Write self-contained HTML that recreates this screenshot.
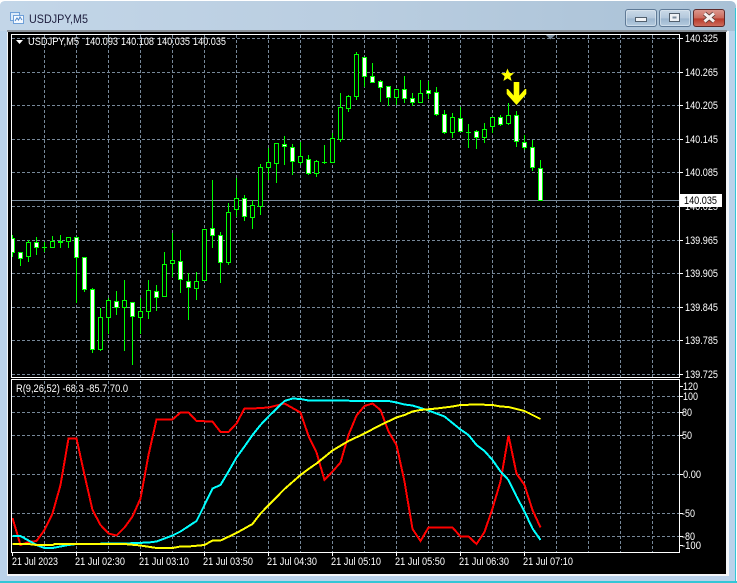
<!DOCTYPE html>
<html><head><meta charset="utf-8"><title>USDJPY,M5</title>
<style>
html,body{margin:0;padding:0;background:#fff;width:737px;height:583px;overflow:hidden}
svg{display:block}
text{font-family:"Liberation Sans",sans-serif;font-size:11px;fill:#fff}
.c{shape-rendering:crispEdges}
</style></head><body>
<svg width="737" height="583" viewBox="0 0 737 583" xmlns="http://www.w3.org/2000/svg">
<defs>
<linearGradient id="tb" x1="0" x2="1" y1="0" y2="0"><stop offset="0" stop-color="#c3d6e8"/><stop offset=".5" stop-color="#b9cde0"/><stop offset="1" stop-color="#a9c1d6"/></linearGradient>
<linearGradient id="btn" x1="0" x2="0" y1="0" y2="1"><stop offset="0" stop-color="#cbdae8"/><stop offset=".5" stop-color="#b3c8dc"/><stop offset=".55" stop-color="#9cb6cf"/><stop offset="1" stop-color="#b7cde0"/></linearGradient>
<linearGradient id="cls" x1="0" x2="0" y1="0" y2="1"><stop offset="0" stop-color="#dc9a90"/><stop offset=".5" stop-color="#cb6a5c"/><stop offset=".55" stop-color="#b83a2a"/><stop offset="1" stop-color="#cf6f5f"/></linearGradient>
<clipPath id="cm"><rect x="12" y="35" width="667" height="342"/></clipPath>
<clipPath id="cs"><rect x="12" y="380" width="667" height="172"/></clipPath>
</defs>
<path d="M0 6Q0 1 6 1H730Q735 1 736 6V583H0Z" fill="#bad2ea"/>
<path d="M0 6Q0 1 6 1H730Q735 1 736 6V31H0Z" fill="url(#tb)"/>
<rect x="0" y="581" width="737" height="2" fill="#33c6d6"/>
<rect x="735" y="8" width="1" height="575" fill="#33c6d6"/>
<rect x="7" y="31" width="722" height="545" fill="#f4f6f8"/>
<rect x="7" y="30" width="720" height="2" fill="#8a9198"/>
<rect x="8" y="32" width="718" height="542" fill="#000"/>

<!-- title icon -->
<rect x="10.500" y="12.500" width="9" height="8" fill="#dcebfa" stroke="#6fa0d8"/>
<rect x="13.500" y="15.500" width="10" height="8" fill="#f4f9ff" stroke="#6fa0d8"/>
<path d="M15 21l2-3 1.500 2 1.500-3 2 3" fill="none" stroke="#4d86c8" stroke-width="1"/>
<text x="29" y="23" textLength="59" lengthAdjust="spacingAndGlyphs" style="fill:#1c1c3c;font-size:12px">USDJPY,M5</text>

<!-- buttons -->
<rect x="625.500" y="9.500" width="31" height="17" rx="2.500" fill="url(#btn)" stroke="#5f7a96"/>
<rect x="626.500" y="10.500" width="29" height="15" rx="2" fill="none" stroke="#dfe9f2" stroke-opacity=".6"/>
<rect x="635.500" y="17.500" width="11" height="4" fill="#f1f4f7" stroke="#52606e"/>
<rect x="659.500" y="9.500" width="31" height="17" rx="2.500" fill="url(#btn)" stroke="#5f7a96"/>
<rect x="660.500" y="10.500" width="29" height="15" rx="2" fill="none" stroke="#dfe9f2" stroke-opacity=".6"/>
<rect x="669.500" y="13.500" width="10" height="8" fill="#eef2f6" stroke="#52606e"/>
<rect x="672.500" y="16.500" width="4" height="2" fill="#7a8b9c"/>
<rect x="693.500" y="9.500" width="31" height="17" rx="2.500" fill="url(#cls)" stroke="#5e2a2a"/>
<path d="M704.500 13.500L714 21.500M714 13.500L704.500 21.500" stroke="#5a3a36" stroke-width="4.500"/>
<path d="M704.500 13.500L714 21.500M714 13.500L704.500 21.500" stroke="#f6f0ee" stroke-width="3"/>

<!-- main chart -->
<g class="c" clip-path="url(#cm)" stroke="#778899" stroke-dasharray="3 2" fill="none">
<path d="M12 38.500H679M12 72.500H679M12 105.500H679M12 139.500H679M12 172.500H679M12 206.500H679M12 240.500H679M12 273.500H679M12 307.500H679M12 340.500H679M12 374.500H679"/>
<path d="M44.500 35V377M76.500 35V377M108.500 35V377M140.500 35V377M172.500 35V377M204.500 35V377M236.500 35V377M268.500 35V377M300.500 35V377M332.500 35V377M364.500 35V377M396.500 35V377M428.500 35V377M460.500 35V377M492.500 35V377M524.500 35V377M556.500 35V377M588.500 35V377M620.500 35V377M652.500 35V377"/>
</g>
<path class="c" d="M12 200.500H680" stroke="#778899" fill="none"/>
<g class="c" clip-path="url(#cm)">
<path fill="none" stroke="#00ff00" d="M12.500 235V257M20.500 252V266M28.500 240V262M36.500 237V255M44.500 242V252M42 247.500H47M52.500 236V247M60.500 235V248M68.500 237V248M76.500 237V303M84.500 257V292M92.500 288V353M100.500 308V351M108.500 298V334M116.500 291V315M124.500 280V351M132.500 302V365M140.500 298V334M148.500 280V319M156.500 285V311M164.500 252V297M172.500 233V277M180.500 250V293M188.500 273V320M196.500 272V300M204.500 229V281M212.500 180V248M220.500 232V283M228.500 203V265M236.500 178V217M244.500 195V221M252.500 200V229M260.500 164V215M268.500 148V180M276.500 143V183M284.500 136V165M292.500 144V175M300.500 142V165M308.500 155V175M316.500 160V177M324.500 145V164M322 162.500H327M332.500 133V163M340.500 93V142M348.500 95V112M356.500 52V100M364.500 57V87M372.500 63V83M380.500 80V102M388.500 86V106M396.500 89V105M404.500 76V103M412.500 93V106M420.500 80V103M428.500 81V99M436.500 87V116M444.500 110V134M452.500 113V138M460.500 107V132M468.500 124V148M466 132.500H471M476.500 130V149M484.500 123V143M492.500 117V133M500.500 115V126M508.500 103V125M516.500 111V147M524.500 135V150M532.500 140V171M540.500 160V200"/>
<path fill="#000" stroke="#00ff00" d="M26.500 242.500h4v14h-4zM50.500 241.500h4v6h-4zM66.500 237.500h4v4h-4zM98.500 317.500h4v32h-4zM106.500 300.500h4v17h-4zM122.500 300.500h4v7h-4zM138.500 311.500h4v6h-4zM146.500 290.500h4v21h-4zM162.500 264.500h4v32h-4zM170.500 260.500h4v3h-4zM194.500 281.500h4v7h-4zM202.500 229.500h4v51h-4zM226.500 212.500h4v50h-4zM234.500 198.500h4v11h-4zM250.500 205.500h4v12h-4zM258.500 167.500h4v39h-4zM266.500 162.500h4v5h-4zM274.500 143.500h4v20h-4zM298.500 156.500h4v6h-4zM314.500 161.500h4v12h-4zM330.500 138.500h4v24h-4zM338.500 107.500h4v32h-4zM346.500 96.500h4v12h-4zM354.500 54.500h4v42h-4zM394.500 89.500h4v8h-4zM418.500 93.500h4v9h-4zM450.500 117.500h4v15h-4zM482.500 129.500h4v8h-4zM490.500 117.500h4v9h-4zM506.500 115.500h4v8h-4z"/>
<path fill="#fff" stroke="#00ff00" d="M10.500 238.500h4v14h-4zM18.500 252.500h4v6h-4zM34.500 242.500h4v5h-4zM58.500 241.500h4v1h-4zM74.500 237.500h4v20h-4zM82.500 257.500h4v32h-4zM90.500 289.500h4v60h-4zM114.500 301.500h4v6h-4zM130.500 302.500h4v14h-4zM154.500 291.500h4v6h-4zM178.500 261.500h4v18h-4zM186.500 281.500h4v6h-4zM210.500 228.500h4v7h-4zM218.500 235.500h4v27h-4zM242.500 198.500h4v18h-4zM282.500 144.500h4v2h-4zM290.500 147.500h4v14h-4zM306.500 159.500h4v14h-4zM362.500 57.500h4v19h-4zM370.500 76.500h4v6h-4zM378.500 81.500h4v6h-4zM386.500 86.500h4v11h-4zM402.500 89.500h4v9h-4zM410.500 98.500h4v4h-4zM426.500 90.500h4v3h-4zM434.500 92.500h4v22h-4zM442.500 114.500h4v18h-4zM458.500 118.500h4v13h-4zM474.500 131.500h4v6h-4zM498.500 117.500h4v7h-4zM514.500 115.500h4v26h-4zM522.500 142.500h4v5h-4zM530.500 147.500h4v20h-4zM538.500 168.500h4v32h-4z"/>
</g>
<path d="M546 35H555L550.500 39.500Z" fill="#778899"/>
<polygon points="507.500,68.500 509.300,73 514,73.300 510.400,76.300 511.600,81 507.500,78.400 503.400,81 504.600,76.300 501,73.300 505.700,73" fill="#ffff00"/>
<polygon points="513.700,82 519.300,82 519.300,95.500 525,89 526.300,89 526.300,94 516.500,105 506.700,94 506.700,89 508,89 513.700,95.500" fill="#ffff00"/>
<rect class="c" x="11.500" y="34.500" width="668" height="343" fill="none" stroke="#fff"/>
<path d="M16 40H23L19.500 44Z" fill="#fff"/>
<text x="28" y="45" textLength="51" lengthAdjust="spacingAndGlyphs">USDJPY,M5</text>
<text x="85" y="45" textLength="33" lengthAdjust="spacingAndGlyphs">140.093</text>
<text x="121" y="45" textLength="33" lengthAdjust="spacingAndGlyphs">140.108</text>
<text x="157" y="45" textLength="33" lengthAdjust="spacingAndGlyphs">140.035</text>
<text x="193" y="45" textLength="33" lengthAdjust="spacingAndGlyphs">140.035</text>

<!-- price axis -->
<path class="c" d="M680 38.500h3M680 72.500h3M680 105.500h3M680 139.500h3M680 172.500h3M680 206.500h3M680 240.500h3M680 273.500h3M680 307.500h3M680 340.500h3M680 374.500h3" stroke="#fff" fill="none"/>
<g>
<text x="685" y="42" textLength="33" lengthAdjust="spacingAndGlyphs">140.325</text>
<text x="685" y="76" textLength="33" lengthAdjust="spacingAndGlyphs">140.265</text>
<text x="685" y="109" textLength="33" lengthAdjust="spacingAndGlyphs">140.205</text>
<text x="685" y="143" textLength="33" lengthAdjust="spacingAndGlyphs">140.145</text>
<text x="685" y="176" textLength="33" lengthAdjust="spacingAndGlyphs">140.085</text>
<text x="685" y="210" textLength="33" lengthAdjust="spacingAndGlyphs">140.025</text>
<text x="685" y="244" textLength="33" lengthAdjust="spacingAndGlyphs">139.965</text>
<text x="685" y="277" textLength="33" lengthAdjust="spacingAndGlyphs">139.905</text>
<text x="685" y="311" textLength="33" lengthAdjust="spacingAndGlyphs">139.845</text>
<text x="685" y="344" textLength="33" lengthAdjust="spacingAndGlyphs">139.785</text>
<text x="685" y="378" textLength="33" lengthAdjust="spacingAndGlyphs">139.725</text>
</g>
<rect x="680" y="194" width="42" height="13" fill="#fff"/>
<text x="684" y="204" textLength="33" lengthAdjust="spacingAndGlyphs" style="fill:#000">140.035</text>

<!-- RSI sub window -->
<g class="c" clip-path="url(#cs)" stroke="#778899" stroke-dasharray="3 2" fill="none">
<path d="M12 396.500H679M12 412.500H679M12 435.500H679M12 474.500H679M12 513.500H679M12 536.500H679"/>
<path d="M44.500 381V552M76.500 381V552M108.500 381V552M140.500 381V552M172.500 381V552M204.500 381V552M236.500 381V552M268.500 381V552M300.500 381V552M332.500 381V552M364.500 381V552M396.500 381V552M428.500 381V552M460.500 381V552M492.500 381V552M524.500 381V552M556.500 381V552M588.500 381V552M620.500 381V552M652.500 381V552"/>
</g>
<g class="c" clip-path="url(#cs)" fill="none" stroke-width="2" stroke-linejoin="miter">
<polyline stroke="#ff0000" points="12.500,518 20.500,545 28.500,542 36.500,541 44.500,530 52.500,513.500 60.500,485 68.500,438.500 76.500,438.500 84.500,475 92.500,510 100.500,525 108.500,533.500 116.500,535.500 124.500,527.500 132.500,516.500 140.500,498.500 148.500,455 156.500,419.500 172.500,419.500 180.500,412.500 188.500,412.500 196.500,421 212.500,421.500 220.500,432 228.500,432 236.500,423.500 244.500,408.500 252.500,408.500 268.500,407.500 284.500,403.500 300.500,412.500 308.500,436 316.500,452.500 324.500,480 332.500,471.500 340.500,462.500 348.500,435 356.500,415.500 364.500,406 372.500,403.500 380.500,410 388.500,431.500 396.500,445 404.500,481.500 412.500,529 420.500,541 428.500,527.500 452.500,527.500 460.500,536.500 468.500,536.500 476.500,544 484.500,532 492.500,508.500 500.500,481.500 508.500,435.500 516.500,473.500 524.500,485 532.500,510 540.500,527.500"/>
<polyline stroke="#00ffff" points="12.500,536 20.500,536 28.500,540.500 36.500,545 44.500,548 52.500,548 60.500,546.500 68.500,545 76.500,544 124.500,543.500 148.500,542.500 156.500,541.500 172.500,535.500 180.500,531.500 196.500,521 204.500,505 212.500,488.500 220.500,485 228.500,471.500 236.500,457.500 244.500,446.500 252.500,435 260.500,425 268.500,416.500 284.500,401 292.500,398.500 300.500,399 308.500,400.500 388.500,401 396.500,402.500 404.500,404.500 412.500,405.500 428.500,410.500 444.500,416.500 460.500,429.500 468.500,435 476.500,445 484.500,451 492.500,460 500.500,471.500 508.500,480 516.500,496.500 524.500,511.500 532.500,528.500 540.500,540"/>
<polyline stroke="#ffff00" points="12.500,544 28.500,544 36.500,545 52.500,545 55,544 124.500,544 140.500,545.500 156.500,548 172.500,548 180.500,546.500 188.500,546.500 204.500,545 212.500,540.500 220.500,540.500 236.500,533 252.500,524 260.500,513.500 284.500,489 300.500,475 308.500,469 316.500,463.500 332.500,450.500 348.500,441 364.500,433.500 380.500,425 396.500,417.500 404.500,415 412.500,411.500 420.500,410 436.500,408.500 452.500,406.500 460.500,405 476.500,404.500 492.500,405 500.500,406.500 508.500,407 524.500,411 532.500,415 540.500,419"/>
</g>
<rect class="c" x="11.500" y="379.500" width="668" height="173" fill="none" stroke="#fff"/>
<text x="16" y="392" textLength="112" lengthAdjust="spacingAndGlyphs">R(9,26,52) -68.3 -85.7 70.0</text>
<path class="c" d="M680 386.500h3M680 396.500h3M680 412.500h3M680 435.500h3M680 474.500h3M680 513.500h3M680 536.500h3M680 545.500h3" stroke="#fff" fill="none"/>
<text x="683" y="390" textLength="15" lengthAdjust="spacingAndGlyphs">120</text>
<text x="683" y="400" textLength="15" lengthAdjust="spacingAndGlyphs">100</text>
<text x="682" y="416" textLength="10" lengthAdjust="spacingAndGlyphs">80</text>
<text x="682" y="439" textLength="10" lengthAdjust="spacingAndGlyphs">50</text>
<text x="683" y="478" textLength="18" lengthAdjust="spacingAndGlyphs">0.00</text>
<text x="682" y="517" textLength="13" lengthAdjust="spacingAndGlyphs">-50</text>
<text x="682" y="540" textLength="13" lengthAdjust="spacingAndGlyphs">-80</text>
<text x="682" y="549" textLength="19" lengthAdjust="spacingAndGlyphs">-100</text>

<!-- time axis -->
<path class="c" d="M12.500 553v3M76.500 553v3M140.500 553v3M204.500 553v3M268.500 553v3M332.500 553v3M396.500 553v3M460.500 553v3M524.500 553v3" stroke="#fff" fill="none"/>
<text x="12" y="565" textLength="46" lengthAdjust="spacingAndGlyphs">21 Jul 2023</text>
<text x="75" y="565" textLength="50" lengthAdjust="spacingAndGlyphs">21 Jul 02:30</text>
<text x="139" y="565" textLength="50" lengthAdjust="spacingAndGlyphs">21 Jul 03:10</text>
<text x="203" y="565" textLength="50" lengthAdjust="spacingAndGlyphs">21 Jul 03:50</text>
<text x="267" y="565" textLength="50" lengthAdjust="spacingAndGlyphs">21 Jul 04:30</text>
<text x="331" y="565" textLength="50" lengthAdjust="spacingAndGlyphs">21 Jul 05:10</text>
<text x="395" y="565" textLength="50" lengthAdjust="spacingAndGlyphs">21 Jul 05:50</text>
<text x="459" y="565" textLength="50" lengthAdjust="spacingAndGlyphs">21 Jul 06:30</text>
<text x="523" y="565" textLength="50" lengthAdjust="spacingAndGlyphs">21 Jul 07:10</text>
</svg>
</body></html>
